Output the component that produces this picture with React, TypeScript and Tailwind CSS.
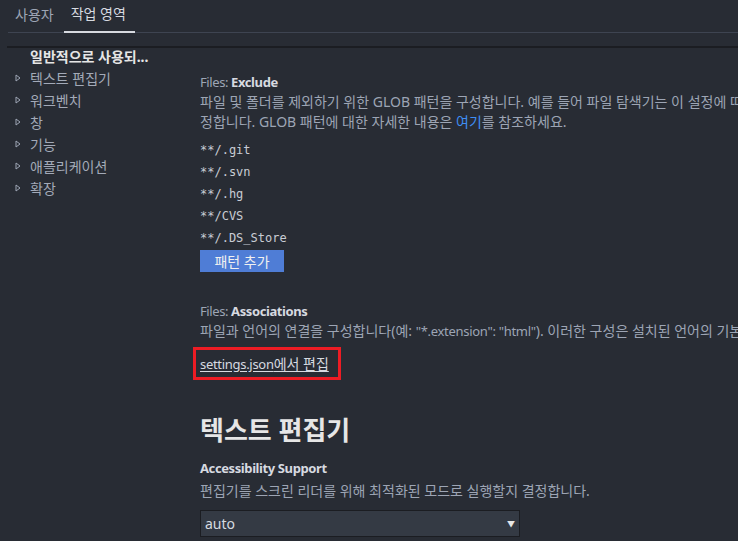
import React from "react";

const font = { fontFamily: '"Noto Sans", "Noto Sans CJK KR", sans-serif' };

function Tri() {
  return (
    <svg width="6" height="8" viewBox="0 0 6 8" className="shrink-0">
      <path d="M1 1 L5 4 L1 7 Z" fill="none" stroke="#9da5b4" strokeWidth="1" />
    </svg>
  );
}

export default function App() {
  const side = ["텍스트 편집기", "워크벤치", "창", "기능", "애플리케이션", "확장"];
  const globs = ["**/.git", "**/.svn", "**/.hg", "**/CVS", "**/.DS_Store"];
  return (
    <div
      className="w-[738px] h-[541px] bg-[#282c34] overflow-hidden text-[14px] text-[#9da5b4] flex flex-col"
      style={font}
    >
      {/* tabs */}
      <div className="h-[46px] pl-[8px] shrink-0">
        <div className="flex h-[33px] border-b border-[#3e4451]">
          <div className="h-[33px] pl-[7px] pr-[10px] flex items-center pb-[4px] text-[#9da5b4]">사용자</div>
          <div className="h-[33px] px-[7px] w-[71px] flex items-center pb-[4px] border-b-2 border-[#d7dae0] text-[#d7dae0] -mb-px whitespace-nowrap">
            작업 영역
          </div>
        </div>
      </div>
      <div className="ml-[7px] h-[2px] bg-[#1b1d22] shrink-0" />
      <div className="flex flex-1 min-h-0">
        {/* sidebar */}
        <div className="w-[185px] shrink-0 pl-[15px]">
          <div className="h-[22px] -mt-[3px] flex items-center pl-[15px] font-bold text-[#e6e6e6] whitespace-nowrap">
            일반적으로 사용되...
          </div>
          {side.map((s) => (
            <div key={s} className="h-[22px] flex items-center gap-[9px] text-[#a3aab8] whitespace-nowrap">
              <Tri />
              <span>{s}</span>
            </div>
          ))}
        </div>
        {/* main */}
        <div className="flex-1 min-w-0 pl-[15px] pt-[24px] overflow-hidden">
          <div className="leading-[20px] whitespace-nowrap text-[13px] tracking-[-0.4px]">
            <span>Files: </span>
            <span className="font-bold text-[#d7dae0]">Exclude</span>
          </div>
          <div className="leading-[20px] whitespace-nowrap">
            파일 및 폴더를 제외하기 위한 GLOB 패턴을 구성합니다. 예를 들어 파일 탐색기는 이 설정에 따라 표시하거나 숨길 파일 및 폴더를 결
          </div>
          <div className="leading-[20px] whitespace-nowrap">
            정합니다. GLOB 패턴에 대한 자세한 내용은 <span className="text-[#3f8ef5]">여기</span>를 참조하세요.
          </div>
          <div className="mt-[7px]">
            {globs.map((g) => (
              <div
                key={g}
                className="h-[22px] flex items-center text-[12px] text-[#c8ccd4]"
                style={{ fontFamily: '"DejaVu Sans Mono", "Liberation Mono", monospace' }}
              >
                {g}
              </div>
            ))}
          </div>
          <button className="mt-[1px] h-[22px] w-[84px] bg-[#4f7dd6] text-[#f0f0f0] text-[14px] flex items-center justify-center">
            패턴 추가
          </button>
          <div className="mt-[29px] leading-[20px] whitespace-nowrap text-[13px] tracking-[-0.4px]">
            <span>Files: </span>
            <span className="font-bold text-[#d7dae0]">Associations</span>
          </div>
          <div className="leading-[20px] whitespace-nowrap">
            파일과 언어의 연결을 구성합니다(예:{" "}
            <span className="text-[13px] tracking-[-0.3px]">"*.extension": "html"</span>). 이러한 구성은 설치된 언어의 기본 연결보다 우선합니다.
          </div>
          <div className="mt-[6px] -ml-[7px] w-[148px] h-[33px] border-[3px] border-[#ed1c24] flex items-center pl-[4px]">
            <span className="underline text-[#d7dae0] underline-offset-2 whitespace-nowrap">
              <span className="text-[13px] tracking-[-0.3px]">settings.json</span>에서 편집
            </span>
          </div>
          <div className="mt-[32px] text-[26px] leading-[36px] font-bold text-[#e6e6e6] whitespace-nowrap">
            텍스트 편집기
          </div>
          <div className="mt-[10px] leading-[20px] font-bold text-[#d7dae0] whitespace-nowrap text-[13px] tracking-[-0.4px]">
            Accessibility Support
          </div>
          <div className="mt-[3px] leading-[20px] whitespace-nowrap">
            편집기를 스크린 리더를 위해 최적화된 모드로 실행할지 결정합니다.
          </div>
          <div className="mt-[9px] w-[320px] h-[27px] bg-[#343a44] border border-[#1b1d22] flex items-center justify-between pl-[4px] pr-[4px]">
            <span className="text-[#d7dae0]">auto</span>
            <span className="text-[8px] text-[#e6e6e6]">▼</span>
          </div>
        </div>
      </div>
    </div>
  );
}
